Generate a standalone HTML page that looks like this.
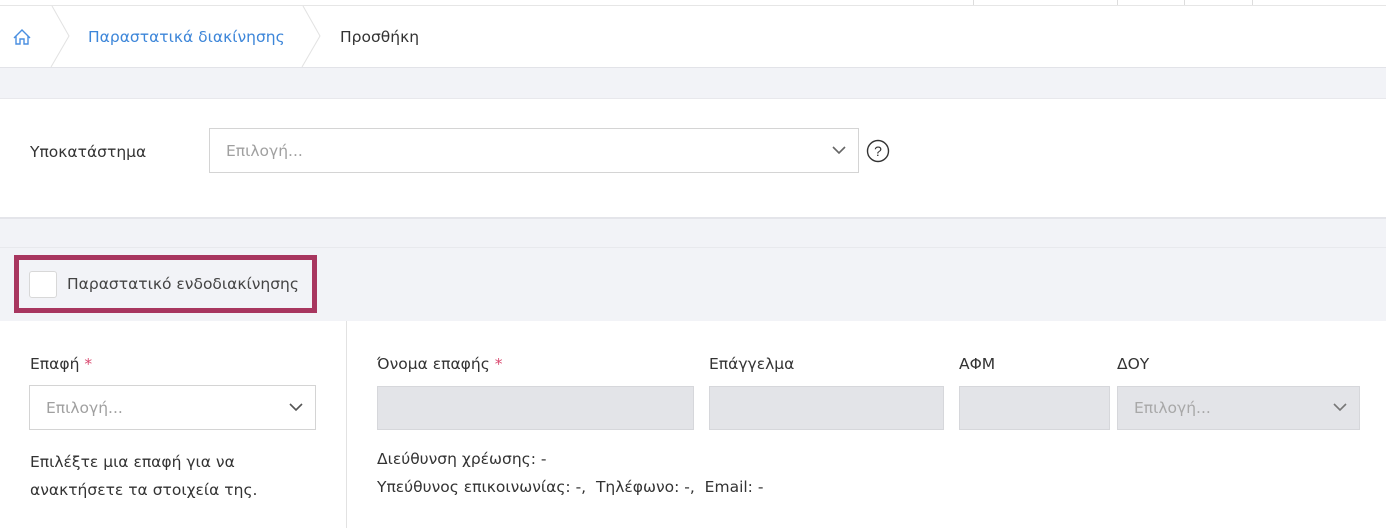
<!DOCTYPE html>
<html><head><meta charset="utf-8"><style>
*{box-sizing:border-box;margin:0;padding:0}
body{width:1386px;height:528px;overflow:hidden;background:#f2f3f7;font-family:"DejaVu Sans","Liberation Sans",sans-serif;color:#454545;font-size:15.5px;position:relative}
.a{position:absolute;line-height:20px}
.sel{position:absolute;border:1px solid #d4d4d4;background:#fff;color:#a0a0a0;padding-left:16px;display:flex;align-items:center}
.dis{position:absolute;background:#e3e4e8;border:1px solid #d6d7db}
.chev{position:absolute;right:12px;top:50%;margin-top:-5px}
</style></head><body>
<div class="a" style="left:0;top:0;width:1386px;height:6px;background:#fff;border-bottom:1px solid #e6e6e6"></div>
<div class="a" style="left:973px;top:0;width:1px;height:5px;background:#ddd"></div>
<div class="a" style="left:1117px;top:0;width:1px;height:5px;background:#ddd"></div>
<div class="a" style="left:1184px;top:0;width:1px;height:5px;background:#ddd"></div>
<div class="a" style="left:1252px;top:0;width:1px;height:5px;background:#ddd"></div>
<div class="a" style="left:0;top:6px;width:1386px;height:62px;background:#fff;border-bottom:1px solid #e2e3e8"></div>
<svg class="a" style="left:0;top:6px" width="340" height="61"><g fill="none" stroke="#e2e2e2"><path d="M52 0 L69 30 L51 61"/><path d="M303 0 L320 30 L302 61"/></g>
<g fill="none" stroke="#4a8fe0" stroke-width="1.4"><path d="M14 32 L22 24 L30 32 M16 30 V38 H20 V33 H24 V38 H28 V30"/></g></svg>
<div class="a" style="left:88px;top:27px;color:#3d86d9">Παραστατικά διακίνησης</div>
<div class="a" style="left:340px;top:27px;color:#333">Προσθήκη</div>
<div class="a" style="left:0;top:98px;width:1386px;height:121px;background:#fff;border-top:1px solid #e8e8ec;border-bottom:2px solid #e4e5ea"></div>
<div class="a" style="left:30px;top:142px;color:#333">Υποκατάστημα</div>
<div class="sel" style="left:209px;top:128px;width:650px;height:45px">Επιλογή...<svg class="chev" width="14" height="9"><path d="M1 1 L7 7 L13 1" fill="none" stroke="#666" stroke-width="1.6"/></svg></div>
<svg class="a" style="left:866px;top:139px" width="24" height="24"><circle cx="12" cy="12" r="10.5" fill="none" stroke="#333" stroke-width="1.4"/><text x="12" y="17" font-size="14" text-anchor="middle" fill="#333" font-family="Liberation Sans">?</text></svg>
<div class="a" style="left:0;top:247px;width:1386px;height:1px;background:#e8e9ed"></div>
<div class="a" style="left:14px;top:255px;width:303px;height:58px;border:5px solid #a8365f"></div>
<div class="a" style="left:29px;top:271px;width:28px;height:27px;background:#fff;border:1px solid #d8d8d8;border-radius:3px"></div>
<div class="a" style="left:67px;top:274px;color:#444">Παραστατικό ενδοδιακίνησης</div>
<div class="a" style="left:0;top:321px;width:1386px;height:207px;background:#fff"></div>
<div class="a" style="left:346px;top:321px;width:1px;height:207px;background:#e2e2e2"></div>
<div class="a" style="left:30px;top:354px;color:#333">Επαφή <span style="color:#d9496f">*</span></div>
<div class="sel" style="left:29px;top:385px;width:287px;height:45px">Επιλογή...<svg class="chev" width="14" height="9"><path d="M1 1 L7 7 L13 1" fill="none" stroke="#555" stroke-width="1.6"/></svg></div>
<div class="a" style="left:30px;top:448px;line-height:28px;color:#333">Επιλέξτε μια επαφή για να<br>ανακτήσετε τα στοιχεία της.</div>
<div class="a" style="left:377px;top:354px;color:#333">Όνομα επαφής <span style="color:#d9496f">*</span></div>
<div class="a" style="left:709px;top:354px;color:#333">Επάγγελμα</div>
<div class="a" style="left:959px;top:354px;color:#333">ΑΦΜ</div>
<div class="a" style="left:1117px;top:354px;color:#333">ΔΟΥ</div>
<div class="dis" style="left:377px;top:386px;width:317px;height:44px"></div>
<div class="dis" style="left:709px;top:386px;width:235px;height:44px"></div>
<div class="dis" style="left:959px;top:386px;width:151px;height:44px"></div>
<div class="dis" style="left:1117px;top:386px;width:243px;height:44px;color:#a8a8a8;padding:11px 16px;line-height:20px">Επιλογή...<svg class="chev" width="14" height="9"><path d="M1 1 L7 7 L13 1" fill="none" stroke="#777" stroke-width="1.6"/></svg></div>
<div class="a" style="left:377px;top:445px;line-height:28px;color:#333">Διεύθυνση χρέωσης: -<br>Υπεύθυνος επικοινωνίας: -,&nbsp; Τηλέφωνο: -,&nbsp; Email: -</div>
</body></html>
